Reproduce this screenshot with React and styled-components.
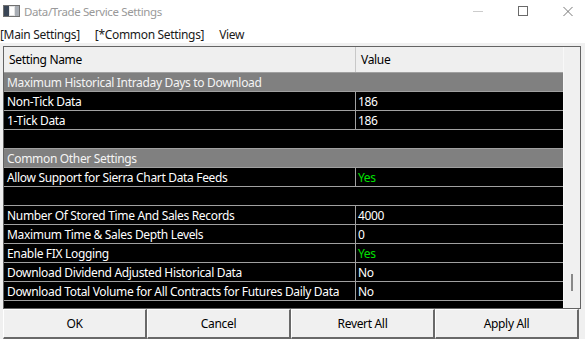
import React from "react";
import styled, { createGlobalStyle } from "styled-components";

const GlobalStyle = createGlobalStyle`
  html, body { margin: 0; padding: 0; background: #ffffff; }
  body { font-family: "Noto Sans", "Open Sans", sans-serif; font-size: 12px; letter-spacing: -0.33px; }
  * { box-sizing: border-box; }
`;

const Window = styled.div`
  width: 585px;
  height: 339px;
  display: flex;
  flex-direction: column;
  background: #ffffff;
  overflow: hidden;
`;

const TitleBar = styled.div`
  height: 22px;
  display: flex;
  align-items: center;
  padding-left: 3px;
  gap: 4px;
`;

const TitleText = styled.span`
  color: #999999;
  font-size: 11.5px;
  letter-spacing: -0.38px;
  line-height: 14px;
  flex: 1;
  padding-top: 1px;
`;

const Controls = styled.div`
  display: flex;
  align-items: center;
  height: 100%;
  gap: 35px;
  padding-right: 12px;
`;

const ControlBtn = styled.div`
  width: 10px;
  height: 100%;
  display: flex;
  align-items: center;
  justify-content: center;
`;

const MenuBar = styled.div`
  height: 21px;
  display: flex;
  align-items: center;
  gap: 15px;
  padding-top: 5px;
  color: #1a1a1a;
`;

const MenuItem = styled.span`
  font-size: 12px;
  line-height: 14px;
`;

const Body = styled.div`
  flex: 1;
  background: #f0f0f0;
  padding: 3px 0 0 3px;
  display: flex;
  flex-direction: column;
`;

const Frame = styled.div`
  width: 578px;
  height: 263px;
  border: 1px solid #646464;
  display: grid;
  grid-template-columns: 559px 17px;
`;

const Table = styled.div`
  display: flex;
  flex-direction: column;
  background: #000000;
  overflow: hidden;
`;

const HeaderRow = styled.div`
  height: 26px;
  display: grid;
  grid-template-columns: 352px 1fr;
  background: #efefef;
  border-bottom: 1px solid #a0a0a0;
`;

const HeaderCell = styled.div`
  display: flex;
  align-items: center;
  padding-left: 5px;
  color: #000000;
  border-right: ${(p) => (p.$divider ? "1px solid #c8c8c8" : "none")};
`;

const SectionRow = styled.div`
  height: 19px;
  display: flex;
  align-items: center;
  padding-left: 3px;
  background: #808080;
  color: #f4f4f4;
  border-bottom: 1px solid #a0a0a0;
`;

const DataRow = styled.div`
  height: 19px;
  display: grid;
  grid-template-columns: 352px 1fr;
  border-bottom: 1px solid #a0a0a0;
  color: #ffffff;
`;

const BlankRow = styled.div`
  height: 19px;
  border-bottom: 1px solid #a0a0a0;
`;

const Cell = styled.div`
  display: flex;
  align-items: center;
  padding-left: ${(p) => (p.$value ? "2px" : "3px")};
  white-space: nowrap;
  overflow: hidden;
  color: ${(p) => (p.$green ? "#00e000" : "#ffffff")};
  border-right: ${(p) => (p.$divider ? "1px solid #a0a0a0" : "none")};
`;

const Scrollbar = styled.div`
  background: #f0f0f0;
  border-left: 1px solid #f8f8f8;
  position: relative;
`;

const Thumb = styled.div`
  position: absolute;
  left: 7px;
  top: 227px;
  width: 2px;
  height: 17px;
  background: #888888;
`;

const ButtonRow = styled.div`
  display: flex;
  height: 30px;
`;

const Button = styled.button`
  width: 144px;
  height: 30px;
  margin: 0;
  padding: 0;
  background: #f0f0f0;
  border-style: solid;
  border-width: 1px 2px 2px 1px;
  border-color: #ffffff #696969 #696969 #ffffff;
  font-family: "Noto Sans", "Open Sans", sans-serif;
  font-size: 12px;
  letter-spacing: -0.33px;
  color: #000000;
  display: flex;
  align-items: center;
  justify-content: center;
`;

const AppIcon = () => (
  <svg width="17" height="12" viewBox="0 0 17 12">
    <rect x="0.5" y="0.5" width="16" height="11" fill="#e4e4e4" stroke="#707070" />
    <rect x="1" y="1" width="5" height="10" fill="#3a4656" />
    <rect x="7" y="2" width="4" height="8" fill="#ffffff" />
    <rect x="12" y="1" width="4" height="10" fill="#a8adb4" />
  </svg>
);

const rows = [
  { t: "section", name: "Maximum Historical Intraday Days to Download" },
  { t: "data", name: "Non-Tick Data", value: "186" },
  { t: "data", name: "1-Tick Data", value: "186" },
  { t: "blank" },
  { t: "section", name: "Common Other Settings" },
  { t: "data", name: "Allow Support for Sierra Chart Data Feeds", value: "Yes", green: true },
  { t: "blank" },
  { t: "data", name: "Number Of Stored Time And Sales Records", value: "4000" },
  { t: "data", name: "Maximum Time & Sales Depth Levels", value: "0" },
  { t: "data", name: "Enable FIX Logging", value: "Yes", green: true },
  { t: "data", name: "Download Dividend Adjusted Historical Data", value: "No" },
  { t: "data", name: "Download Total Volume for All Contracts for Futures Daily Data", value: "No" },
];

export default function App() {
  return (
    <>
      <GlobalStyle />
      <Window>
        <TitleBar>
          <AppIcon />
          <TitleText>Data/Trade Service Settings</TitleText>
          <Controls>
            <ControlBtn>
              <svg width="10" height="10" viewBox="0 0 10 10">
                <line x1="0" y1="5.5" x2="10" y2="5.5" stroke="#cccccc" strokeWidth="1" />
              </svg>
            </ControlBtn>
            <ControlBtn>
              <svg width="10" height="10" viewBox="0 0 10 10">
                <rect x="0.5" y="0.5" width="9" height="9" fill="none" stroke="#6a6a6a" strokeWidth="1" />
              </svg>
            </ControlBtn>
            <ControlBtn>
              <svg width="11" height="11" viewBox="0 0 11 11">
                <path d="M0.5 0.5 L10.5 10.5 M10.5 0.5 L0.5 10.5" stroke="#6a6a6a" strokeWidth="1" />
              </svg>
            </ControlBtn>
          </Controls>
        </TitleBar>
        <MenuBar>
          <MenuItem>[Main Settings]</MenuItem>
          <MenuItem>[*Common Settings]</MenuItem>
          <MenuItem>View</MenuItem>
        </MenuBar>
        <Body>
          <Frame>
            <Table>
              <HeaderRow>
                <HeaderCell $divider>Setting Name</HeaderCell>
                <HeaderCell>Value</HeaderCell>
              </HeaderRow>
              {rows.map((r, i) => {
                if (r.t === "section") return <SectionRow key={i}>{r.name}</SectionRow>;
                if (r.t === "blank") return <BlankRow key={i} />;
                return (
                  <DataRow key={i}>
                    <Cell $divider>{r.name}</Cell>
                    <Cell $value $green={r.green}>{r.value}</Cell>
                  </DataRow>
                );
              })}
            </Table>
            <Scrollbar>
              <Thumb />
            </Scrollbar>
          </Frame>
          <ButtonRow>
            <Button>OK</Button>
            <Button>Cancel</Button>
            <Button>Revert All</Button>
            <Button>Apply All</Button>
          </ButtonRow>
        </Body>
      </Window>
    </>
  );
}
